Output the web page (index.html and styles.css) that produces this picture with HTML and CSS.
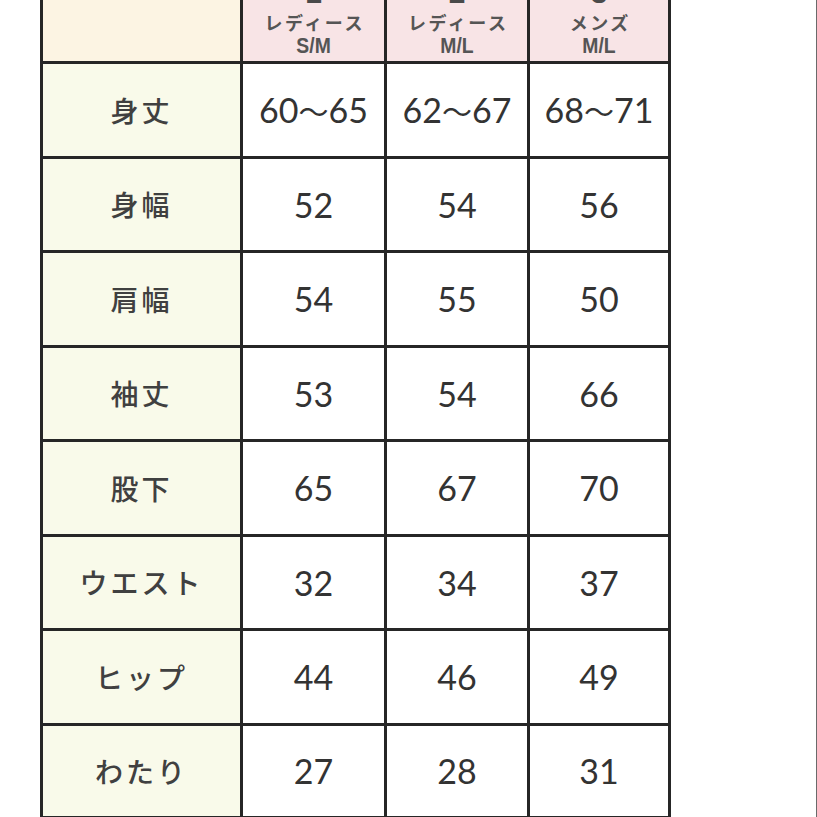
FILE: index.html
```html
<!DOCTYPE html>
<html lang="ja">
<head>
<meta charset="utf-8">
<link rel="stylesheet" href="styles.css">
</head>
<body>
<div class="page">
  <div class="chart">
    <div class="cell head-label"></div>
    <div class="cell head"><span class="no">1</span><span class="kind">レディース</span><span class="size">S/M</span></div>
    <div class="cell head"><span class="no">2</span><span class="kind">レディース</span><span class="size">M/L</span></div>
    <div class="cell head"><span class="no">3</span><span class="kind">メンズ</span><span class="size">M/L</span></div>

    <div class="cell label">身丈</div>
    <div class="cell val">60<span class="wave">～</span>65</div>
    <div class="cell val">62<span class="wave">～</span>67</div>
    <div class="cell val">68<span class="wave">～</span>71</div>

    <div class="cell label">身幅</div>
    <div class="cell val">52</div>
    <div class="cell val">54</div>
    <div class="cell val">56</div>

    <div class="cell label">肩幅</div>
    <div class="cell val">54</div>
    <div class="cell val">55</div>
    <div class="cell val">50</div>

    <div class="cell label">袖丈</div>
    <div class="cell val">53</div>
    <div class="cell val">54</div>
    <div class="cell val">66</div>

    <div class="cell label">股下</div>
    <div class="cell val">65</div>
    <div class="cell val">67</div>
    <div class="cell val">70</div>

    <div class="cell label">ウエスト</div>
    <div class="cell val">32</div>
    <div class="cell val">34</div>
    <div class="cell val">37</div>

    <div class="cell label">ヒップ</div>
    <div class="cell val">44</div>
    <div class="cell val">46</div>
    <div class="cell val">49</div>

    <div class="cell label">わたり</div>
    <div class="cell val">27</div>
    <div class="cell val">28</div>
    <div class="cell val">31</div>
  </div>
</div>
</body>
</html>
```
FILE: styles.css
```css
html, body {
  margin: 0;
  padding: 0;
  background: #ffffff;
  overflow: hidden;
}

.page {
  width: 816px;
  height: 817px;
  border-right: 1px solid #6a6a6a;
  overflow: hidden;
}

.chart {
  display: grid;
  grid-template-columns: 197px 141px 140px 138px;
  grid-template-rows: 100px repeat(7, 91.5px) 90px;
  gap: 3px;
  padding: 3px;
  margin: -42px 0 0 40px;
  width: max-content;
  background: #262626;
}

.cell {
  display: flex;
  align-items: center;
  justify-content: center;
  color: #3a3a3a;
}

.head-label {
  background: #fcf4e3;
}

.head {
  background: #f8e4e6;
  flex-direction: column;
  justify-content: flex-end;
  padding-bottom: 4px;
  box-sizing: border-box;
  color: #555555;
}

.no {
  font-family: "Liberation Sans", sans-serif;
  font-weight: 700;
  font-size: 30px;
  line-height: 30px;
  margin-bottom: 3px;
  color: #4a4a4a;
}

.kind {
  font-family: "Noto Sans CJK JP", sans-serif;
  font-weight: 700;
  font-size: 18px;
  line-height: 22px;
  letter-spacing: 2.5px;
  margin-right: -2.5px;
}

.size {
  font-family: "Liberation Sans", sans-serif;
  font-weight: 700;
  font-size: 22px;
  line-height: 23px;
  margin-top: 1px;
  transform: scaleX(0.88);
}

.label {
  background: #f9faea;
  font-family: "Noto Sans CJK JP", sans-serif;
  font-size: 28px;
  font-weight: 500;
  letter-spacing: 3px;
  color: #404040;
}

.val {
  background: #ffffff;
  font-family: "Lato", sans-serif;
  font-size: 34px;
  color: #333333;
}

.wave {
  font-family: "Noto Sans CJK JP", sans-serif;
  font-size: 30px;
}
```
